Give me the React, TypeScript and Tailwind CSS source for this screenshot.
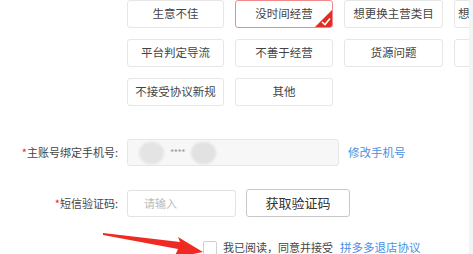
import type { ReactNode } from 'react'

const reasons = [
  '生意不佳',
  '没时间经营',
  '想更换主营类目',
  '想',
  '平台判定导流',
  '不善于经营',
  '货源问题',
  '',
  '不接受协议新规',
  '其他',
]

const selected = '没时间经营'

function ReasonButton({ label, clipped }: { label: string; clipped?: boolean }) {
  const active = label === selected
  return (
    <div
      className={`relative flex h-[28px] items-center overflow-hidden rounded-[3px] border bg-white text-[11.5px] text-[#444] ${
        active ? 'border-[#f08a8a]' : 'border-[#e6e6e6]'
      } ${clipped ? 'justify-start pl-[3px]' : 'justify-center'}`}
    >
      {label}
      {active && (
        <svg className="absolute bottom-0 right-0" width="17" height="17" viewBox="0 0 17 17">
          <path d="M17 0 L17 17 L0 17 Z" fill="#e02e24" />
          <path d="M7 12 L10 14.5 L15 8.5" stroke="#fff" strokeWidth="1.6" fill="none" />
        </svg>
      )}
    </div>
  )
}

function Label({ children }: { children: ReactNode }) {
  return (
    <div className="w-[118px] shrink-0 text-right text-[11px] text-[#444]">
      <span className="text-[#e02e24]">*</span>
      {children}
    </div>
  )
}

export default function App() {
  return (
    <div
      className="flex h-[254px] w-[473px] overflow-hidden bg-[#f4f4f4]"
      style={{ fontFamily: '"Noto Sans CJK SC", "Noto Sans", sans-serif' }}
    >
      <div className="relative w-[469px] shrink-0 overflow-hidden bg-white">
        <div className="ml-[127px] grid w-[400px] grid-cols-[97px_98px_99px_97px] gap-x-[11px] gap-y-[11px]">
          {reasons.map((r, i) =>
            i === 7 ? (
              <div key={i} className="h-[28px] rounded-[3px] border border-[#e6e6e6] bg-white" />
            ) : (
              <ReasonButton key={i} label={r} clipped={i === 3} />
            ),
          )}
        </div>

        <div className="mt-[33px] flex items-center gap-[9px]">
          <Label>主账号绑定手机号:</Label>
          <div className="relative flex h-[27px] w-[212px] items-center rounded-[3px] border border-[#e6e6e6] bg-[#f7f7f7]">
            <div className="ml-[11px] h-[22px] w-[25px] rounded-full bg-[#e4e4e4] blur-[1px]" />
            <span className="mx-[6px] text-[9px] tracking-tighter text-[#999]">****</span>
            <div className="h-[22px] w-[25px] rounded-full bg-[#e2e2e2] blur-[1px]" />
          </div>
          <span className="text-[11.5px] text-[#4a8fe0]">修改手机号</span>
        </div>

        <div className="mt-[23px] flex items-center gap-[9px]">
          <Label>短信验证码:</Label>
          <div className="flex h-[27px] w-[109px] items-center rounded-[3px] border border-[#e3e3e3] bg-white pl-[16px] text-[11px] text-[#bbb]">
            请输入
          </div>
          <div className="ml-[1px] flex h-[28px] w-[104px] items-center justify-center rounded-[3px] border border-[#c8c8c8] bg-white text-[13px] text-[#333]">
            获取验证码
          </div>
        </div>

        <div className="ml-[203px] mt-[22px] flex items-center gap-[6px]">
          <div className="h-[14px] w-[14px] rounded-[2px] border border-[#cfcfcf] bg-white" />
          <span className="text-[11px] text-[#444]">
            我已阅读，同意并接受
            <span className="ml-[7px] text-[11.5px] text-[#4a8fe0]">拼多多退店协议</span>
          </span>
        </div>

        <svg className="absolute left-[100px] top-[228px]" width="105" height="30" viewBox="0 0 105 30">
          <path d="M3 5 L80 14 L78 9 L103 24 L74 30 L78 21 L3 7 Z" fill="#ee2a22" />
        </svg>
      </div>
    </div>
  )
}
